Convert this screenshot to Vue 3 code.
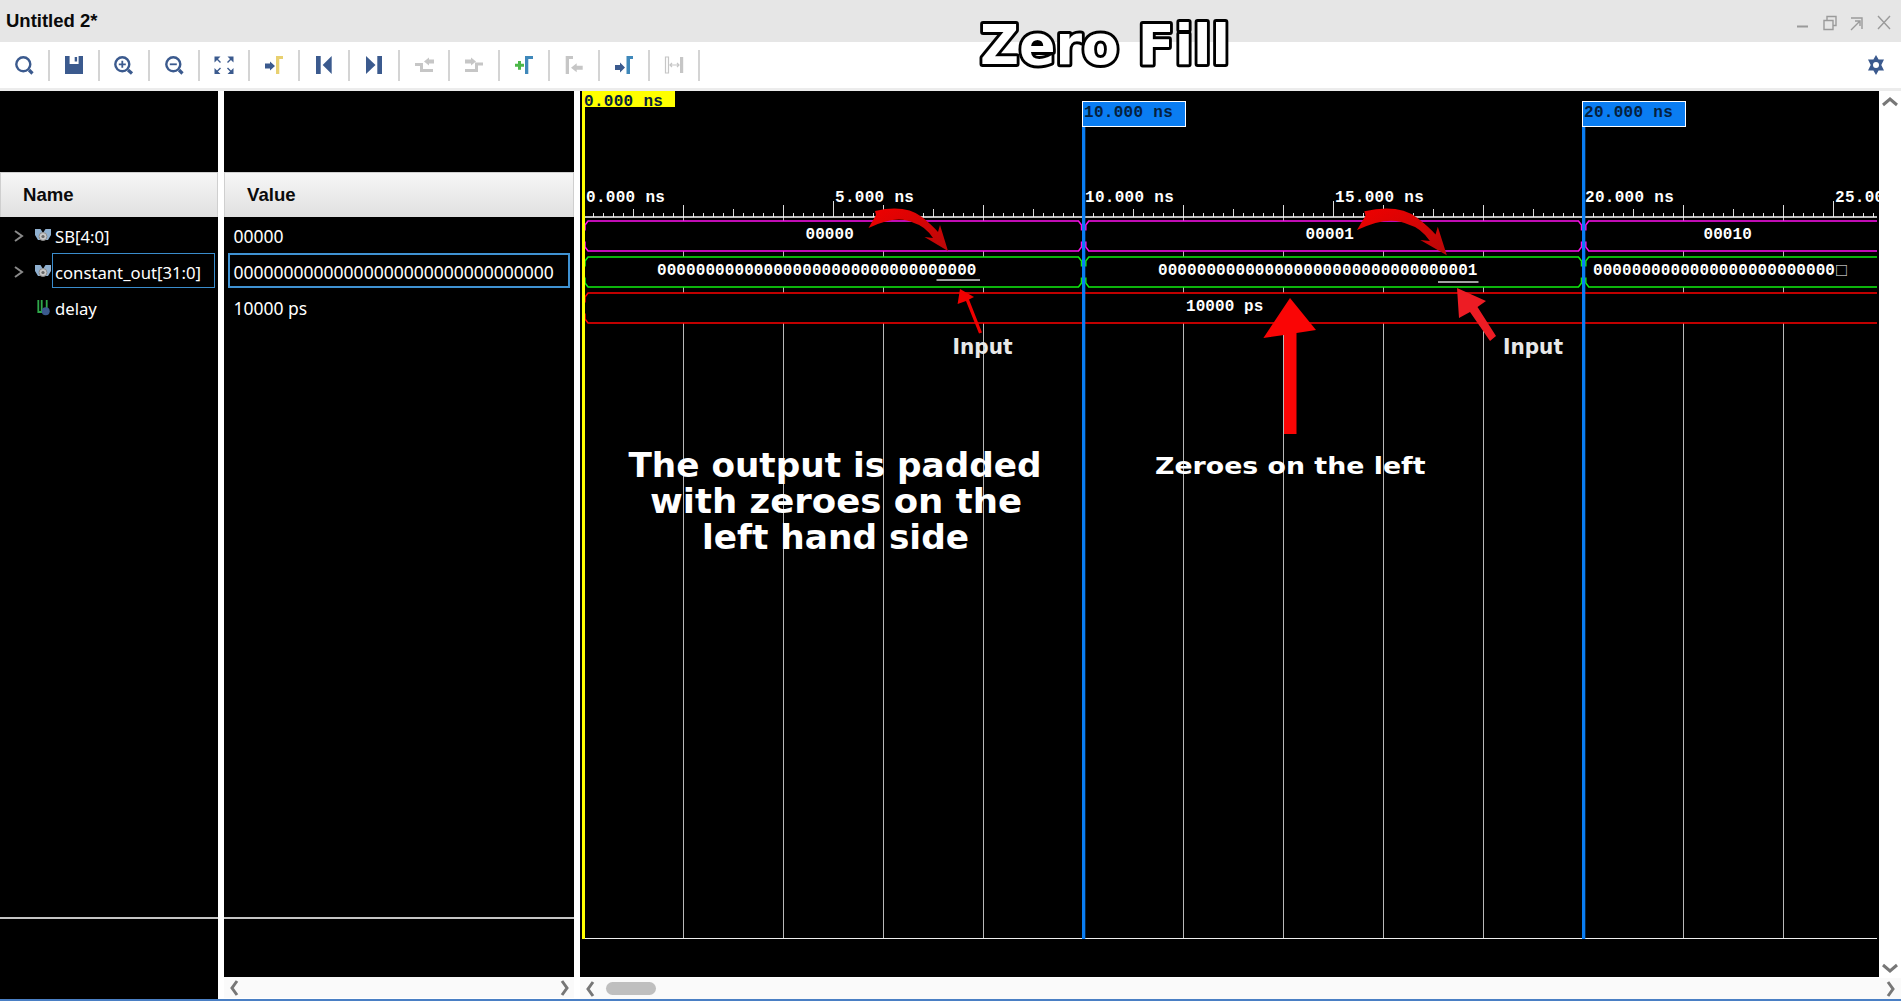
<script setup>
const X0 = 583.5
const END = 1877
const ticks = []
for (let d = 10; X0 + d < END; d += 10) {
  let top = 213
  if (d % 250 === 0) top = 201
  else if (d % 100 === 0) top = 205
  else if (d % 50 === 0) top = 209
  ticks.push({ x: X0 + d, top })
}
const grid = []
for (let d = 100; X0 + d < END; d += 100) grid.push(X0 + d)

function segment(x0, x1, t, b, openEnd) {
  const top = `M${x0} ${t + 9.5}V${t + 4}L${x0 + 3} ${t}H${openEnd ? x1 : x1 - 3}` + (openEnd ? '' : `L${x1} ${t + 4}V${t + 9.5}`)
  const bot = `M${x0} ${b - 9.5}V${b - 4}L${x0 + 3} ${b}H${openEnd ? x1 : x1 - 3}` + (openEnd ? '' : `L${x1} ${b - 4}V${b - 9.5}`)
  return top + bot
}
const rows = [
  { cls: 'sig-m', t: 221, b: 251, d: segment(585, 1081.5, 221, 251) + segment(1085.8, 1581.5, 221, 251) + segment(1585.8, END, 221, 251, true) },
  { cls: 'sig-g', t: 257, b: 287, d: segment(585, 1081.5, 257, 287) + segment(1085.8, 1581.5, 257, 287) + segment(1585.8, END, 257, 287, true) },
  { cls: 'sig-r', t: 293, b: 323, d: segment(585, END, 293, 323, true) }
]
const rulerLabels = [
  { x: 586, s: '0.000 ns' }, { x: 835, s: '5.000 ns' }, { x: 1085, s: '10.000 ns' },
  { x: 1335, s: '15.000 ns' }, { x: 1585, s: '20.000 ns' }, { x: 1835, s: '25.000 ns' }
]
const values = [
  { x: 805.5, y: 239, s: '00000' }, { x: 1305.6, y: 239, s: '00001' }, { x: 1703.5, y: 239, s: '00010' },
  { x: 657, y: 275, s: '000000000000000000000000000000000' },
  { x: 1158, y: 275, s: '000000000000000000000000000000001' },
  { x: 1186, y: 311, s: '10000 ps' }
]
const curved = 'M868.5 228L876 215L875 211Q905 204 922 217Q933 226 938 232L940 225L948 251L924.5 237L933 238Q925 226 914 223Q897 214 868.5 228Z'
</script>

<template>
  <div class="app">
    <header class="titlebar">
      <span class="title">Untitled 2*</span>
      <svg class="winctl" width="94" height="20" viewBox="0 0 94 20">
        <path class="win" d="M0 13.5H11" />
        <path class="win thin" d="M27 7.5h9v9h-9zM30 7.5v-4h9v9h-3" />
        <path class="win thin" d="M54 5h11v11M54 17l9-9M58 8h5v5" />
        <path class="win thin" d="M81 3l12 13M93 3L81 16" />
      </svg>
    </header>

    <div class="toolbar">
      <div class="tool"><svg width="26" height="26" viewBox="0 0 26 26"><circle class="ol" cx="12.300" cy="12.300" r="7" /><path class="ol thick" d="M18 18l3.500 3.500" /></svg></div>
      <div class="tool"><svg width="26" height="26" viewBox="0 0 26 26"><path class="navy" d="M4 4h4.600v8h9V4H22v18H4z" /><rect class="navy" x="13.700" y="5" width="2.400" height="4.500" /></svg></div>
      <div class="tool"><svg width="26" height="26" viewBox="0 0 26 26"><circle class="ol" cx="11.300" cy="12.300" r="7" /><path class="ol thick" d="M17 18l4 3.500" /><path class="ol slimmer" d="M7.800 12.300h7M11.300 8.800v7" /></svg></div>
      <div class="tool"><svg width="26" height="26" viewBox="0 0 26 26"><circle class="ol" cx="12.300" cy="12.300" r="7" /><path class="ol thick" d="M18 18l3.500 3.500" /><path class="ol slimmer" d="M8.800 12.300h7" /></svg></div>
      <div class="tool"><svg width="26" height="26" viewBox="0 0 26 26"><path class="navy" d="M3.500 4.500h6l-6 6zM22.500 4.500v6l-6-6zM3.500 22v-6l6 6zM22.500 22h-6l6-6z" /><path class="ol slim" d="M5.500 6.500l4 4M20.500 6.500l-4 4M5.500 20l4-4M20.500 20l-4-4" /></svg></div>
      <div class="tool"><svg width="26" height="26" viewBox="0 0 26 26"><path class="navy" d="M4 11.500h5V9.500l5 4.500-5 4.500v-2H4z" /><path class="yellow" d="M15 4h7v3h-3.700v15H15z" /></svg></div>
      <div class="tool"><svg width="26" height="26" viewBox="0 0 26 26"><rect class="navy" x="5" y="4" width="4.700" height="18" /><path class="navy" d="M20.700 4v18L11.700 13z" /></svg></div>
      <div class="tool"><svg width="26" height="26" viewBox="0 0 26 26"><path class="navy" d="M5 4v18l9.500-9z" /><rect class="navy" x="16.300" y="4" width="4.700" height="18" /></svg></div>
      <div class="tool"><svg width="26" height="26" viewBox="0 0 26 26"><path class="gray" d="M4 11h8v6h10v3H9v-6H4z" /><path class="gray" d="M13 9.500l5-4v2h5v4h-5v2z" /></svg></div>
      <div class="tool"><svg width="26" height="26" viewBox="0 0 26 26"><path class="gray" d="M14 10.500h8v3h-5V20H4v-3h10z" /><path class="gray" d="M4 7.500h6v-2l5 4-5 4v-2H4z" /></svg></div>
      <div class="tool"><svg width="26" height="26" viewBox="0 0 26 26"><path class="green" d="M7 9h3v2.800h3v3h-3v3H7v-3H4v-3h3z" /><path class="teal" d="M14 4h8v3h-4.700v15H14z" /></svg></div>
      <div class="tool"><svg width="26" height="26" viewBox="0 0 26 26"><path class="gray" d="M4.700 4H12v3H8v15H4.700z" /><path class="gray" d="M21.700 13.800h-6v-2.500l-5.700 4.500 5.700 4.500v-2.500h6z" /></svg></div>
      <div class="tool"><svg width="26" height="26" viewBox="0 0 26 26"><path class="navy" d="M4 13h5v-2.500l5 5-5 5V18H4z" /><path class="teal" d="M15.500 4H22v3h-3v15h-3.500z" /></svg></div>
      <div class="tool"><svg width="26" height="26" viewBox="0 0 26 26"><path class="grayol slim" d="M4.500 5h3v16h-3zM9 13h9M11 11l-2 2 2 2M16 11l2 2-2 2" /><rect class="gray" x="19" y="5" width="3.200" height="16" /></svg></div>
      <div class="tool-spacer"></div>
      <svg class="gear" width="20" height="20" viewBox="0 0 20 20"><path class="navy" d="M10 0l2.600 4.500H18L15.300 10 18 15.500H12.600L10 20 7.400 15.500H2L4.700 10 2 4.500H7.400z" /><circle class="hole" cx="10" cy="10" r="3" /></svg>
    </div>
    <div class="band"></div>

    <main class="main">
      <section class="col name-col">
        <div class="col-top"></div>
        <div class="col-head">Name</div>
        <div class="col-body">
          <div class="row">
            <svg class="chev" width="12" height="14" viewBox="0 0 12 14"><path d="M3 2l7 5-7 5" /></svg>
            <svg class="sig-ico" width="18" height="16" viewBox="0 0 18 16"><path class="bus" d="M1 1h5.500L9 5l2.500-4H17v6l-3 5H4L1 7z" /><circle class="bus-c" cx="9" cy="8.500" r="4" /><circle class="bus-d" cx="9" cy="8.500" r="1.600" /></svg>
            <span>SB[4:0]</span>
          </div>
          <div class="row sel-name">
            <svg class="chev" width="12" height="14" viewBox="0 0 12 14"><path d="M3 2l7 5-7 5" /></svg>
            <svg class="sig-ico" width="18" height="16" viewBox="0 0 18 16"><path class="bus" d="M1 1h5.500L9 5l2.500-4H17v6l-3 5H4L1 7z" /><circle class="bus-c" cx="9" cy="8.500" r="4" /><circle class="bus-d" cx="9" cy="8.500" r="1.600" /></svg>
            <span>constant_out[31:0]</span>
          </div>
          <div class="row">
            <span class="chev-gap"></span>
            <svg class="sig-ico" width="18" height="16" viewBox="0 0 18 16"><path class="u" d="M4.300 0v12h3.400V0M12.700 0v8" /><circle class="u-c" cx="11.700" cy="11.200" r="4" /></svg>
            <span>delay</span>
          </div>
        </div>
        <div class="col-foot tall"></div>
      </section>

      <section class="col value-col">
        <div class="col-top"></div>
        <div class="col-head value-head">Value</div>
        <div class="col-body">
          <div class="row vrow"><span>00000</span></div>
          <div class="row vrow sel-value"><span>00000000000000000000000000000000</span></div>
          <div class="row vrow"><span>10000 ps</span></div>
        </div>
        <div class="col-foot"></div>
        <div class="hbar">
          <svg class="sb" width="14" height="18" viewBox="0 0 14 18"><path d="M9 2L4 9l5 7" /></svg>
          <svg class="sb" width="14" height="18" viewBox="0 0 14 18"><path d="M5 2l5 7-5 7" /></svg>
        </div>
      </section>

      <section class="wave-col">
        <div class="wave-row">
          <svg class="wave" width="1299" height="886" viewBox="580 91 1299 886">
            <defs>
              <linearGradient id="curve" x1="0" y1="0" x2="1" y2="1">
                <stop offset="0" stop-color="#f00000" />
                <stop offset="1" stop-color="#b80808" />
              </linearGradient>
            </defs>
            <rect x="580" y="91" width="1299" height="886" fill="#000" />
            <line v-for="x in grid" :key="'g' + x" class="grid" :x1="x" :x2="x" y1="205" y2="938" />
            <line v-for="t in ticks" :key="'t' + t.x" class="tick" :x1="t.x" :x2="t.x" :y1="t.top" y2="217" />
            <line class="base" x1="585" x2="1877" y1="217" y2="217" />
            <line class="bottom" x1="585" x2="1877" y1="938.500" y2="938.500" />
            <text v-for="l in rulerLabels" :key="l.s" class="mono ruler" :x="l.x" y="202">{{ l.s }}</text>

            <rect v-for="r in rows" :key="'b' + r.cls" x="585" :y="r.t" width="1292" :height="r.b - r.t" fill="#000" />
            <path v-for="r in rows" :key="r.cls" :class="r.cls" :d="r.d" fill="none" />
            <text v-for="v in values" :key="v.s" class="mono val" :x="v.x" :y="v.y">{{ v.s }}</text>
            <text class="mono val" x="1593" y="275">0000000000000000000000000<tspan class="boxglyph">□</tspan></text>
            <rect class="under" x="936.500" y="279" width="43.500" height="2" />
            <rect class="under" x="1438" y="281" width="40.500" height="2" />

            <rect class="yel" x="582" y="91" width="3" height="848" />
            <rect class="blu" x="1082" y="127" width="3.300" height="812" />
            <rect class="blu" x="1582" y="127" width="3.300" height="812" />
            <rect class="yel" x="582" y="91" width="93" height="16" />
            <text class="mono dark" x="584" y="106">0.000 ns</text>
            <rect class="flag" x="1082.500" y="101.500" width="103" height="25" />
            <text class="mono dark" x="1084" y="117">10.000 ns</text>
            <rect class="flag" x="1582.500" y="101.500" width="103" height="25" />
            <text class="mono dark" x="1584" y="117">20.000 ns</text>

            <path :d="curved" fill="url(#curve)" />
            <path :d="curved" fill="url(#curve)" transform="translate(1357 230) scale(1.13 1.1) translate(-868.5 -228)" />
            <path class="red" d="M960 289L974 297L969 299.500L982 332.500L979 333.500L966 301L957.600 304z" />
            <path class="red2" d="M1457 288L1486 301L1477.500 307L1496 336L1490 341L1470 312L1459 318z" />
            <path class="red3" d="M1290 298L1316 330L1296.500 333V434H1284V335L1263.400 338z" />

            <text class="note" x="628.500" y="477" textLength="413" lengthAdjust="spacingAndGlyphs">The output is padded</text>
            <text class="note" x="650" y="513" textLength="372" lengthAdjust="spacingAndGlyphs">with zeroes on the</text>
            <text class="note" x="702" y="549" textLength="267" lengthAdjust="spacingAndGlyphs">left hand side</text>
            <text class="note mid" x="1155" y="474" textLength="270.500" lengthAdjust="spacingAndGlyphs">Zeroes on the left</text>
            <text class="note small" x="952.600" y="354" textLength="60" lengthAdjust="spacingAndGlyphs">Input</text>
            <text class="note small" x="1503" y="354" textLength="60" lengthAdjust="spacingAndGlyphs">Input</text>
          </svg>
          <div class="vbar">
            <svg class="sb" width="18" height="14" viewBox="0 0 18 14"><path d="M2 10l7-6 7 6" /></svg>
            <svg class="sb" width="18" height="14" viewBox="0 0 18 14"><path d="M2 4l7 6 7-6" /></svg>
          </div>
        </div>
        <div class="hbar wave-hbar">
          <svg class="sb" width="14" height="18" viewBox="0 0 14 18"><path d="M9 2L4 9l5 7" /></svg>
          <div class="thumb"></div>
          <div class="tool-spacer"></div>
          <svg class="sb" width="14" height="18" viewBox="0 0 14 18"><path d="M5 2l5 7-5 7" /></svg>
        </div>
      </section>
    </main>
    <div class="blueline"></div>

    <svg class="zero-fill" width="320" height="70" viewBox="0 0 320 70">
      <text x="18" y="50" textLength="250" lengthAdjust="spacingAndGlyphs">Zero Fill</text>
    </svg>
  </div>
</template>

<style>
html, body { margin: 0; background: #fff; overflow: hidden; }
</style>

<style scoped>
.app { position: relative; width: 1901px; height: 1001px; display: flex; flex-direction: column; background: #fff; overflow: hidden; font-family: "Noto Sans", sans-serif; }
.titlebar { height: 42px; background: #e6e6e6; display: flex; align-items: center; justify-content: space-between; box-sizing: border-box; padding: 0 10px 0 6px; }
.title { font: bold 18.5px "Liberation Sans", sans-serif; color: #0a0a0a; }
.winctl { display: block; margin-top: 4px; }
.win { fill: none; stroke: #9a9a9a; stroke-width: 2; }
.win.thin { stroke-width: 1.4; }
.toolbar { height: 46px; display: flex; align-items: center; background: #fff; }
.tool { width: 50px; height: 31px; display: flex; align-items: center; justify-content: center; box-sizing: border-box; border-right: 2px solid #d4d4d4; }
.tool svg { display: block; }
.tool-spacer { flex: 1; }
.gear { margin-right: 15px; }
.ol { fill: none; stroke: #3b5a8e; stroke-width: 2.4; }
.ol.thick { stroke-width: 3.2; }
.ol.slim { stroke-width: 1.4; }
.ol.slimmer { stroke-width: 1.8; }
.navy { fill: #3b5a8e; }
.yellow { fill: #e8d070; }
.gray { fill: #c6c6c6; }
.grayol { fill: none; stroke: #c6c6c6; stroke-width: 2.6; }
.grayol.slim { stroke-width: 1.2; }
.green { fill: #4cb748; }
.teal { fill: #3f88ba; }
.hole { fill: #fff; }
.band { height: 3px; background: #ececec; }

.main { height: 908px; display: flex; }
.col { display: flex; flex-direction: column; margin-right: 6px; }
.name-col { width: 218px; background: #000; }
.value-col { width: 350px; }
.col-top { height: 81px; background: #000; flex: none; }
.col-head { height: 45px; flex: none; box-sizing: border-box; border: 1px solid #cfcfcf; border-bottom: none; background: linear-gradient(#f6f6f6, #e0e0e0); font: bold 18.6px/44px "Liberation Sans", sans-serif; color: #0b0b0b; padding-left: 22px; }
.col-body { height: 702px; flex: none; background: #000; box-sizing: border-box; padding-top: 2px; border-bottom: 2px solid #c4c4c4; }
.col-foot { height: 58px; background: #000; flex: none; }
.col-foot.tall { height: 80px; }
.row { height: 36px; box-sizing: border-box; padding-bottom: 2px; display: flex; align-items: center; color: #fff; font-size: 16.7px; position: relative; white-space: nowrap; }
.vrow { padding-left: 9.5px; font-size: 17.5px; }
.chev { margin-left: 12px; flex: none; }
.chev path { fill: none; stroke: #8a8a8a; stroke-width: 2; }
.chev-gap { width: 24px; flex: none; }
.sig-ico { margin-left: 10px; margin-right: 3px; margin-top: -1px; flex: none; }
.bus { fill: #8fb0d0; }
.bus-c { fill: #c8c8c8; stroke: #8a8a8a; stroke-width: 1; }
.bus-d { fill: #666; }
.u { fill: none; stroke: #2fa84a; stroke-width: 1.800; }
.u-c { fill: #3b5a8e; }
.sel-name::after { content: ""; position: absolute; left: 52px; right: 3px; top: -2px; height: 35px; box-sizing: border-box; border: 1px solid #3a8ccc; }
.sel-value::after { content: ""; position: absolute; left: 4px; right: 4px; top: -2px; height: 35px; box-sizing: border-box; border: 2px solid #3f92d2; }

.hbar { height: 21px; flex: none; background: #fafafa; display: flex; align-items: center; justify-content: space-between; box-sizing: border-box; padding: 0 3px 0 4px; }
.sb path { fill: none; stroke: #777; stroke-width: 3; }
.wave-col { flex: 1; display: flex; flex-direction: column; min-width: 0; }
.wave-row { height: 887px; flex: none; display: flex; background: #fff; }
.wave { display: block; flex: none; }
.vbar { flex: 1; display: flex; flex-direction: column; justify-content: space-between; align-items: center; box-sizing: border-box; padding: 4px 0 3px; }
.wave-hbar { justify-content: flex-start; padding: 0 4px; }
.thumb { width: 50px; height: 13px; border-radius: 7px; background: #bfbfbf; margin-left: 8px; }
.blueline { height: 2px; background: #4a7fc4; }

.grid { stroke: #b9b9b9; stroke-width: 1; }
.tick { stroke: #dcdcdc; stroke-width: 1; }
.base { stroke: #fff; stroke-width: 1.500; }
.bottom { stroke: #eee; stroke-width: 1; }
.mono { font: bold 16px "Liberation Mono", monospace; fill: #fff; }
.mono.ruler { letter-spacing: 0.3px; }
.mono.val { letter-spacing: 0.08px; }
.mono.dark { fill: #05203c; letter-spacing: 0.3px; }
.boxglyph { font-family: "Noto Sans CJK SC", "DejaVu Sans", sans-serif; font-weight: normal; font-size: 13px; }
.sig-m { stroke: #ff10f0; stroke-width: 1.500; }
.sig-g { stroke: #10f010; stroke-width: 1.500; }
.sig-r { stroke: #ff0000; stroke-width: 1.500; }
.under { fill: #a0a0a0; }
.yel { fill: #ffff00; }
.blu { fill: #0a7df2; }
.flag { fill: #0a7df2; stroke: #fff; stroke-width: 1; }
.red { fill: #f00000; }
.red2 { fill: #ed1c24; }
.red3 { fill: #fa0505; }
.note { font: bold 34px "DejaVu Sans", sans-serif; fill: #fff; }
.note.mid { font-size: 23px; }
.note.small { font-size: 21px; fill: #e8e8e8; }

.zero-fill { position: absolute; left: 962px; top: 14px; }
.zero-fill text { font: bold 56px "DejaVu Sans", sans-serif; fill: #fff; stroke: #000; stroke-width: 6px; paint-order: stroke fill; stroke-linejoin: round; }
</style>
